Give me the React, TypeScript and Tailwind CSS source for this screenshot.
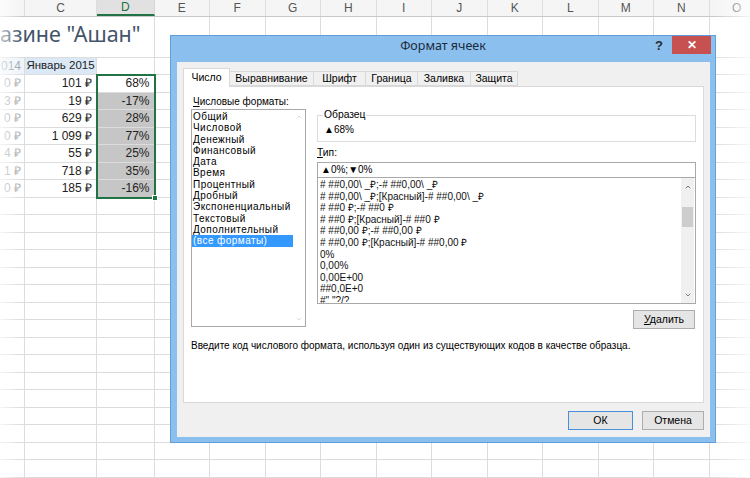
import React from "react";
import { ChevronUp, ChevronDown } from "lucide-react";

const W = [
  "w-[25px]",
  "w-[72px]",
  "w-[57.5px]",
  "w-[55.5px]",
  "w-[55.5px]",
  "w-[55.5px]",
  "w-[55.5px]",
  "w-[55.5px]",
  "w-[55.5px]",
  "w-[55.5px]",
  "w-[55.5px]",
  "w-[55.5px]",
  "w-[55.5px]",
  "w-[55.5px]",
];
const LETTERS = ["", "C", "D", "E", "F", "G", "H", "I", "J", "K", "L", "M", "N", "O"];

const B = ["0 ₽", "3 ₽", "0 ₽", "0 ₽", "4 ₽", "1 ₽", "0 ₽"];
const C = ["101 ₽", "19 ₽", "629 ₽", "1 099 ₽", "55 ₽", "718 ₽", "185 ₽"];
const D = ["68%", "-17%", "28%", "77%", "25%", "35%", "-16%"];

const CATS = [
  "Общий",
  "Числовой",
  "Денежный",
  "Финансовый",
  "Дата",
  "Время",
  "Процентный",
  "Дробный",
  "Экспоненциальный",
  "Текстовый",
  "Дополнительный",
  "(все форматы)",
];

const FORMATS = [
  "# ##0,00\\ _₽;-# ##0,00\\ _₽",
  "# ##0,00\\ _₽;[Красный]-# ##0,00\\ _₽",
  "# ##0 ₽;-# ##0 ₽",
  "# ##0 ₽;[Красный]-# ##0 ₽",
  "# ##0,00 ₽;-# ##0,00 ₽",
  "# ##0,00 ₽;[Красный]-# ##0,00 ₽",
  "0%",
  "0,00%",
  "0,00E+00",
  "##0,0E+0",
  "#\" \"?/?",
];

function HeaderRow() {
  return (
    <div className="flex h-[17px] shrink-0 bg-[#f5f5f5] border-b border-[#c8c8c8]">
      {LETTERS.map((l, i) => (
        <div
          key={i}
          className={
            i === 2
              ? `${W[i]} shrink-0 h-full flex items-center justify-center border-r border-[#d6d6d6] bg-[#e1e1e1] text-[#217346] border-b-2 border-b-[#217346] text-[12px]`
              : `${W[i]} shrink-0 h-full flex items-center justify-center border-r border-[#dedede] text-[#555] text-[12px]`
          }
        >
          {l}
        </div>
      ))}
    </div>
  );
}

function EmptyCells({ from }: { from: number }) {
  return (
    <>
      {W.slice(from).map((w, i) => (
        <div key={i} className={`${w} shrink-0 h-full border-r border-[#dcdcdc]`} />
      ))}
    </>
  );
}

function Sheet() {
  return (
    <div className="flex flex-col font-['Liberation_Sans',Arial,sans-serif] text-[12px] text-[#222]">
      <HeaderRow />
      {/* title row */}
      <div className="flex h-[40.5px] shrink-0 border-b border-[#dcdcdc]">
        <div className="w-[154.5px] shrink-0 h-full border-r border-[#dcdcdc] pt-[4px] overflow-hidden whitespace-nowrap font-['Noto_Sans',sans-serif] text-[21.5px] text-[#44546a] leading-[26px]">
          азине "Ашан"
        </div>
        <EmptyCells from={3} />
      </div>
      {/* header row of table */}
      <div className="flex h-[17.5px] shrink-0 border-b border-[#dcdcdc]">
        <div className="w-[25px] shrink-0 h-full border-r border-[#dcdcdc] bg-[#eef4fa] flex items-center justify-end pr-[3px] text-[#9aa0a6] text-[12px]">
          014
        </div>
        <div className="w-[72px] shrink-0 h-full border-r border-[#dcdcdc] bg-[#dbe8f5] flex items-center justify-center text-[11.5px] whitespace-nowrap">
          Январь 2015
        </div>
        <EmptyCells from={2} />
      </div>
      {B.map((b, r) => (
        <div key={r} className="flex h-[17.5px] shrink-0 border-b border-[#dcdcdc]">
          <div className="w-[25px] shrink-0 h-full border-r border-[#dcdcdc] flex items-center justify-end pr-[3px] text-[#a8a8a8]">
            {b}
          </div>
          <div className="w-[72px] shrink-0 h-full border-r border-[#dcdcdc] flex items-center justify-end pr-[4px]">
            {C[r]}
          </div>
          <div
            className={
              r === 0
                ? "w-[57.5px] shrink-0 h-full border-r border-[#dcdcdc] flex items-center justify-end pr-[4px] bg-white"
                : "w-[57.5px] shrink-0 h-full border-r border-[#b8b8b8] flex items-center justify-end pr-[4px] bg-[#c6c6c6]"
            }
          >
            {D[r]}
          </div>
          <EmptyCells from={3} />
        </div>
      ))}
      {Array.from({ length: 16 }).map((_, r) => (
        <div key={r} className="flex h-[17.5px] shrink-0 border-b border-[#dcdcdc]">
          <EmptyCells from={0} />
        </div>
      ))}
    </div>
  );
}

function Btn({ children, primary, w }: { children: React.ReactNode; primary?: boolean; w: string }) {
  return (
    <div
      className={
        primary
          ? `${w} h-[19px] flex items-center justify-center bg-[#e5e5e5] border border-[#4a90d9] text-[10.5px] text-black`
          : `${w} h-[19px] flex items-center justify-center bg-[#e5e5e5] border border-[#adadad] text-[10.5px] text-black`
      }
    >
      {children}
    </div>
  );
}

function Dialog() {
  const tabs: [string, string][] = [
    ["Выравнивание", "w-[84px]"],
    ["Шрифт", "w-[52px]"],
    ["Граница", "w-[52px]"],
    ["Заливка", "w-[53px]"],
    ["Защита", "w-[47px]"],
  ];
  return (
    <div className="absolute left-[170px] top-[35px] w-[546px] h-[408px] bg-[#8bc0ee] border border-[#5f9fdb] flex flex-col font-['Liberation_Sans',Arial,sans-serif] text-black">
      {/* title bar */}
      <div className="h-[26px] shrink-0 grid grid-cols-[1fr_auto_1fr]">
        <div />
        <div className="h-[20px] leading-[20px] font-['Noto_Sans',sans-serif] text-[12.5px] text-[#1c2a3a]">Формат ячеек</div>
        <div className="flex justify-end items-start pr-[4px]">
          <div className="w-[20px] h-[18px] mr-[3px] flex items-center justify-center text-[13px] font-bold text-[#2a2a2a] leading-none">
            ?
          </div>
          <div className="w-[39px] h-[18px] bg-[#c75050] flex items-center justify-center text-white text-[12px] font-bold leading-none">
            ✕
          </div>
        </div>
      </div>
      {/* body */}
      <div className="flex-1 pl-[6px] pr-[5px] pb-[5px] flex">
        <div className="flex-1 bg-[#f0f0f0] flex flex-col pl-[6px] pr-[5px] pt-[6px]">
          {/* tabs */}
          <div className="flex items-end h-[18px] shrink-0 relative z-10">
            <div className="w-[47px] h-[19px] -mb-[1px] bg-white border border-[#d9d9d9] border-b-0 flex items-center justify-center text-[10.5px]">
              Число
            </div>
            {tabs.map(([t, w]) => (
              <div
                key={t}
                className={`${w} h-[15px] bg-[#f0f0f0] border border-[#d9d9d9] border-l-0 flex items-center justify-center text-[10.5px]`}
              >
                {t}
              </div>
            ))}
          </div>
          {/* panel */}
          <div className="w-[521px] h-[317px] bg-white border border-[#d9d9d9] flex flex-col pt-[8px] pl-[7px]">
            <div className="flex">
              {/* left column */}
              <div className="w-[115px] flex flex-col">
                <div className="h-[14px] leading-[14px] pl-[2px] text-[10px] whitespace-nowrap">
                  <span className="underline">Ч</span>исловые форматы:
                </div>
                <div className="h-[218px] border border-[#a9a9a9] flex">
                  <div className="flex-1 pt-[1px] text-[10px] tracking-[0.45px] leading-[11.3px] whitespace-nowrap overflow-hidden">
                    {CATS.map((c, i) => (
                      <div
                        key={c}
                        className={i === 11 ? "pl-[1px] bg-[#3399ff] text-white" : "pl-[1px]"}
                      >
                        {c}
                      </div>
                    ))}
                  </div>
                  <div className="w-[12px] flex flex-col justify-between items-center py-[3px] bg-white">
                    <ChevronUp size={8} strokeWidth={2} className="text-[#c8c8c8]" />
                    <ChevronDown size={8} strokeWidth={2} className="text-[#c8c8c8]" />
                  </div>
                </div>
              </div>
              {/* right column */}
              <div className="ml-[11px] w-[379px] flex flex-col">
                <div className="relative mt-[20px] h-[27px] border border-[#dcdcdc] pl-[6px] pt-[8px] text-[10px] leading-[11px]">
                  <span className="absolute -top-[7px] left-[5px] bg-white px-[1px] text-[10.3px] leading-[12px]">Образец</span>
                  ▲68%
                </div>
                <div className="mt-[5px] h-[12px] leading-[12px] text-[10.3px]">
                  <span className="underline">Т</span>ип:
                </div>
                <div className="mt-[3px] h-[15px] border border-[#a9a9a9] border-b-0 pl-[3px] text-[10px] leading-[13px]">
                  ▲0%;▼0%
                </div>
                <div className="h-[127px] border border-[#a9a9a9] flex">
                  <div className="flex-1 pt-[1px] pl-[2px] text-[10px] leading-[11.6px] whitespace-nowrap overflow-hidden text-[#111]">
                    {FORMATS.map((f) => (
                      <div key={f}>{f}</div>
                    ))}
                  </div>
                  <div className="w-[13px] bg-[#f0f0f0] flex flex-col items-center pt-[5px] pb-[4px] mr-[1px]">
                    <ChevronUp size={8} strokeWidth={2.5} className="text-[#606060]" />
                    <div className="mt-[16px] w-[11px] h-[20px] bg-[#cdcdcd]" />
                    <div className="flex-1" />
                    <ChevronDown size={8} strokeWidth={2.5} className="text-[#606060]" />
                  </div>
                </div>
                <div className="mt-[6px] flex justify-end pr-[1px]">
                  <Btn w="w-[62px]">
                    <span>
                      <span className="underline">У</span>далить
                    </span>
                  </Btn>
                </div>
              </div>
            </div>
            <div className="mt-[11px] text-[10px] leading-[12px] whitespace-nowrap">
              Введите код числового формата, используя один из существующих кодов в качестве образца.
            </div>
          </div>
          {/* buttons */}
          <div className="mt-[8px] flex justify-end gap-[9px] pr-[1px]">
            <Btn w="w-[65px]" primary>
              ОК
            </Btn>
            <Btn w="w-[62px]">Отмена</Btn>
          </div>
        </div>
      </div>
    </div>
  );
}

export default function App() {
  return (
    <div className="relative w-[750px] h-[478px] overflow-hidden bg-white">
      <Sheet />
      {/* selection */}
      <div className="absolute left-[96px] top-[74px] w-[59.5px] h-[124.5px] border-2 border-[#217346] pointer-events-none" />
      <div className="absolute left-[152px] top-[195px] w-[6px] h-[6px] bg-[#217346] border border-white pointer-events-none" />
      <Dialog />
      {/* edge fade */}
      <div className="absolute left-0 top-0 w-[22px] h-full bg-linear-to-r from-white/70 to-transparent pointer-events-none" />
      <div className="absolute right-0 top-0 w-[36px] h-full bg-linear-to-l from-white/80 to-transparent pointer-events-none" />
    </div>
  );
}
